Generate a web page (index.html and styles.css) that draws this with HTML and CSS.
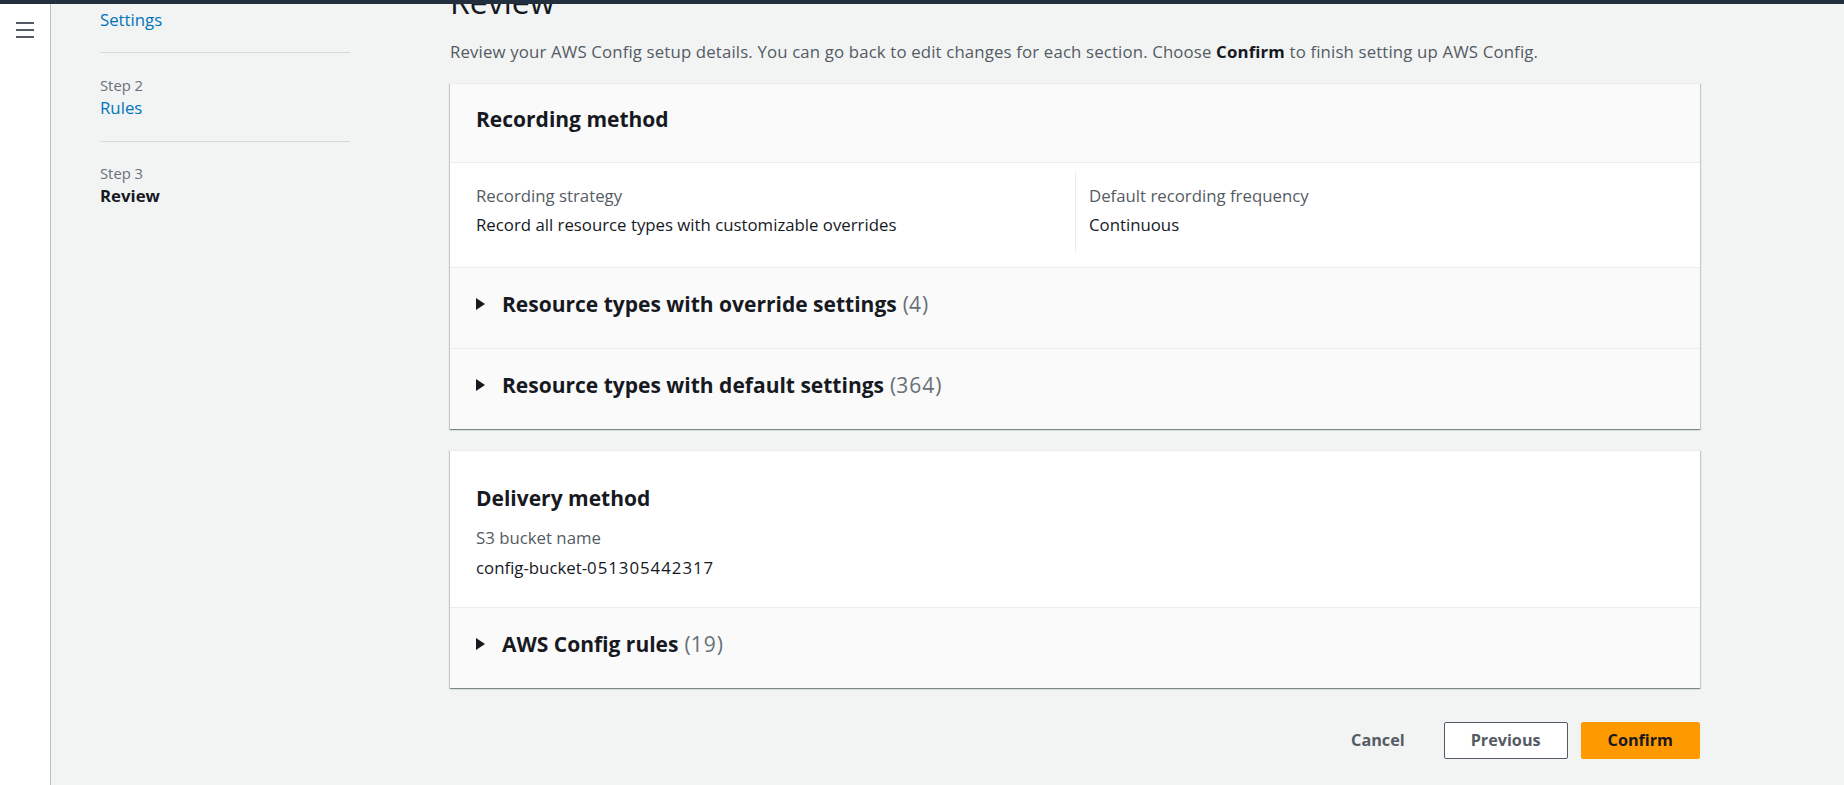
FILE: index.html
```html
<!DOCTYPE html>
<html lang="en">
<head>
<meta charset="utf-8">
<title>Review - AWS Config</title>
<link rel="stylesheet" href="styles.css">
</head>
<body>
<div class="topbar"></div>
<div class="app">
  <aside class="rail">
    <button class="hamburger" type="button" aria-label="Open navigation">
      <svg width="18" height="16" viewBox="0 0 18 16" aria-hidden="true">
        <path d="M0 1h18M0 8h18M0 15h18" stroke="#545b64" stroke-width="2" fill="none"/>
      </svg>
    </button>
  </aside>
  <div class="layout">
    <nav class="steps">
      <ol>
        <li><a class="step-link" href="#">Settings</a></li>
        <li><span class="step-label">Step 2</span><a class="step-link" href="#">Rules</a></li>
        <li><span class="step-label">Step 3</span><span class="step-current">Review</span></li>
      </ol>
    </nav>
    <main class="main">
      <h1 class="title">Review</h1>
      <p class="desc">Review your AWS Config setup details. You can go back to edit changes for each section. Choose <b>Confirm</b> to finish setting up AWS Config.</p>

      <section class="card">
        <header class="card-header">
          <h2 class="card-title">Recording method</h2>
        </header>
        <div class="card-body">
          <div class="kv-grid">
            <div class="kv">
              <div class="kv-label">Recording strategy</div>
              <div class="kv-value">Record all resource types with customizable overrides</div>
            </div>
            <div class="kv kv-split">
              <div class="kv-label">Default recording frequency</div>
              <div class="kv-value">Continuous</div>
            </div>
          </div>
        </div>
        <div class="expander">
          <svg class="caret" width="9" height="12" viewBox="0 0 9 12" aria-hidden="true"><path d="M0 0L9 6L0 12Z" fill="#16191f"/></svg>
          <span class="expander-title">Resource types with override settings</span><span class="counter">(<span class="num">4</span>)</span>
        </div>
        <div class="expander">
          <svg class="caret" width="9" height="12" viewBox="0 0 9 12" aria-hidden="true"><path d="M0 0L9 6L0 12Z" fill="#16191f"/></svg>
          <span class="expander-title">Resource types with default settings</span><span class="counter">(<span class="num">364</span>)</span>
        </div>
      </section>

      <section class="card card-gap">
        <div class="card-plain">
          <h2 class="card-title">Delivery method</h2>
          <div class="kv-label kv-label-top">S3 bucket name</div>
          <div class="kv-value">config-bucket-<span class="num">051305442317</span></div>
        </div>
        <div class="expander">
          <svg class="caret" width="9" height="12" viewBox="0 0 9 12" aria-hidden="true"><path d="M0 0L9 6L0 12Z" fill="#16191f"/></svg>
          <span class="expander-title">AWS Config rules</span><span class="counter">(<span class="num">19</span>)</span>
        </div>
      </section>

      <div class="actions">
        <button class="btn btn-link" type="button">Cancel</button>
        <button class="btn btn-normal" type="button">Previous</button>
        <button class="btn btn-primary" type="button">Confirm</button>
      </div>
    </main>
  </div>
</div>
</body>
</html>
```

FILE: styles.css
```css
html, body {
  margin: 0;
  height: 100%;
}

body {
  font-family: "Open Sans", "Noto Sans", sans-serif;
  font-size: 16.8px;
  line-height: 24px;
  color: #16191f;
  background: #f2f3f3;
  overflow: hidden;
}

.topbar {
  position: fixed;
  top: 0;
  left: 0;
  right: 0;
  height: 4px;
  background: #232f3e;
  z-index: 10;
}

.app {
  display: flex;
  height: 100vh;
}

.rail {
  flex: none;
  width: 51px;
  box-sizing: border-box;
  background: #ffffff;
  border-right: 1px solid #bcc1c5;
  padding: 22px 0 0 16px;
}

.hamburger {
  display: block;
  padding: 0;
  margin: 0;
  border: 0;
  background: none;
  cursor: pointer;
}

.hamburger svg {
  display: block;
}

.layout {
  flex: 1;
  display: flex;
  align-items: flex-start;
  padding-left: 49px;
}

/* Wizard steps */
.steps {
  flex: none;
  width: 250px;
  margin-right: 100px;
}

.steps ol {
  list-style: none;
  margin: 0;
  padding: 0;
}

.steps li {
  padding: 20.5px 0 20.8px;
  border-top: 1px solid #d5dbdb;
}

.steps li:first-child {
  border-top: none;
  padding-top: 7.5px;
}

.step-label {
  display: block;
  font-size: 14.8px;
  line-height: 22px;
  color: #687078;
}

.step-link {
  display: block;
  font-size: 16.8px;
  line-height: 24px;
  color: #0073bb;
  text-decoration: none;
}

.step-current {
  display: block;
  font-size: 16.8px;
  line-height: 24px;
  font-weight: 700;
  color: #16191f;
}

/* Main column */
.main {
  flex: none;
  width: 1250px;
  margin-top: -18px;
}

.title {
  margin: 0;
  font-size: 32px;
  line-height: 40px;
  font-weight: 400;
  color: #16191f;
}

.desc {
  margin: 18px 0 19px;
  color: #545b64;
  letter-spacing: 0.15px;
}

.desc b {
  color: #16191f;
  font-weight: 700;
}

.num {
  letter-spacing: 1px;
}

/* Containers */
.card {
  background: #ffffff;
  border-top: 1px solid #eaeded;
  box-shadow: 0 1px 1px 0 rgba(0, 28, 36, 0.3), 1px 1px 1px 0 rgba(0, 28, 36, 0.15), -1px 1px 1px 0 rgba(0, 28, 36, 0.15);
}

.card-gap {
  margin-top: 21px;
}

.card-header {
  background: #fafafa;
  padding: 21px 26px 29px;
  border-bottom: 1px solid #eaeded;
}

.card-title {
  margin: 0;
  font-size: 21px;
  line-height: 28px;
  font-weight: 700;
  color: #16191f;
}

.card-body {
  padding: 8px 26px 15px;
}

.kv-grid {
  display: grid;
  grid-template-columns: 1fr 1fr;
}

.kv {
  padding: 13px 0 15px;
}

.kv-split {
  border-left: 1px solid #eaeded;
  padding-left: 13px;
}

.kv-label {
  color: #545b64;
  margin-bottom: 5px;
}

.kv-value {
  color: #16191f;
}

.card-plain {
  padding: 33px 26px 27px;
}

.kv-label-top {
  margin-top: 14px;
  margin-bottom: 6px;
}

/* Expandable sections */
.expander {
  display: flex;
  align-items: center;
  background: #fafafa;
  border-top: 1px solid #eaeded;
  padding: 22px 26px 30px;
  font-size: 21px;
  line-height: 28px;
}

.caret {
  flex: none;
  display: block;
  margin-right: 17px;
}

.expander-title {
  font-weight: 700;
  color: #16191f;
}

.counter {
  margin-left: 6px;
  font-weight: 400;
  color: #687078;
}

/* Actions */
.actions {
  display: flex;
  justify-content: flex-end;
  align-items: center;
  gap: 13px;
  margin-top: 34px;
}

.btn {
  font-family: inherit;
  font-size: 16.2px;
  line-height: 21px;
  font-weight: 700;
  padding: 7px 26px;
  border-radius: 2px;
  border: 1px solid transparent;
  cursor: pointer;
}

.btn-link {
  background: transparent;
  color: #545b64;
  padding: 7px 20px;
  margin-right: 5px;
}

.btn-normal {
  background: #ffffff;
  border-color: #545b64;
  color: #545b64;
}

.btn-primary {
  background: #ff9900;
  border-color: #ff9900;
  color: #16191f;
}
```
